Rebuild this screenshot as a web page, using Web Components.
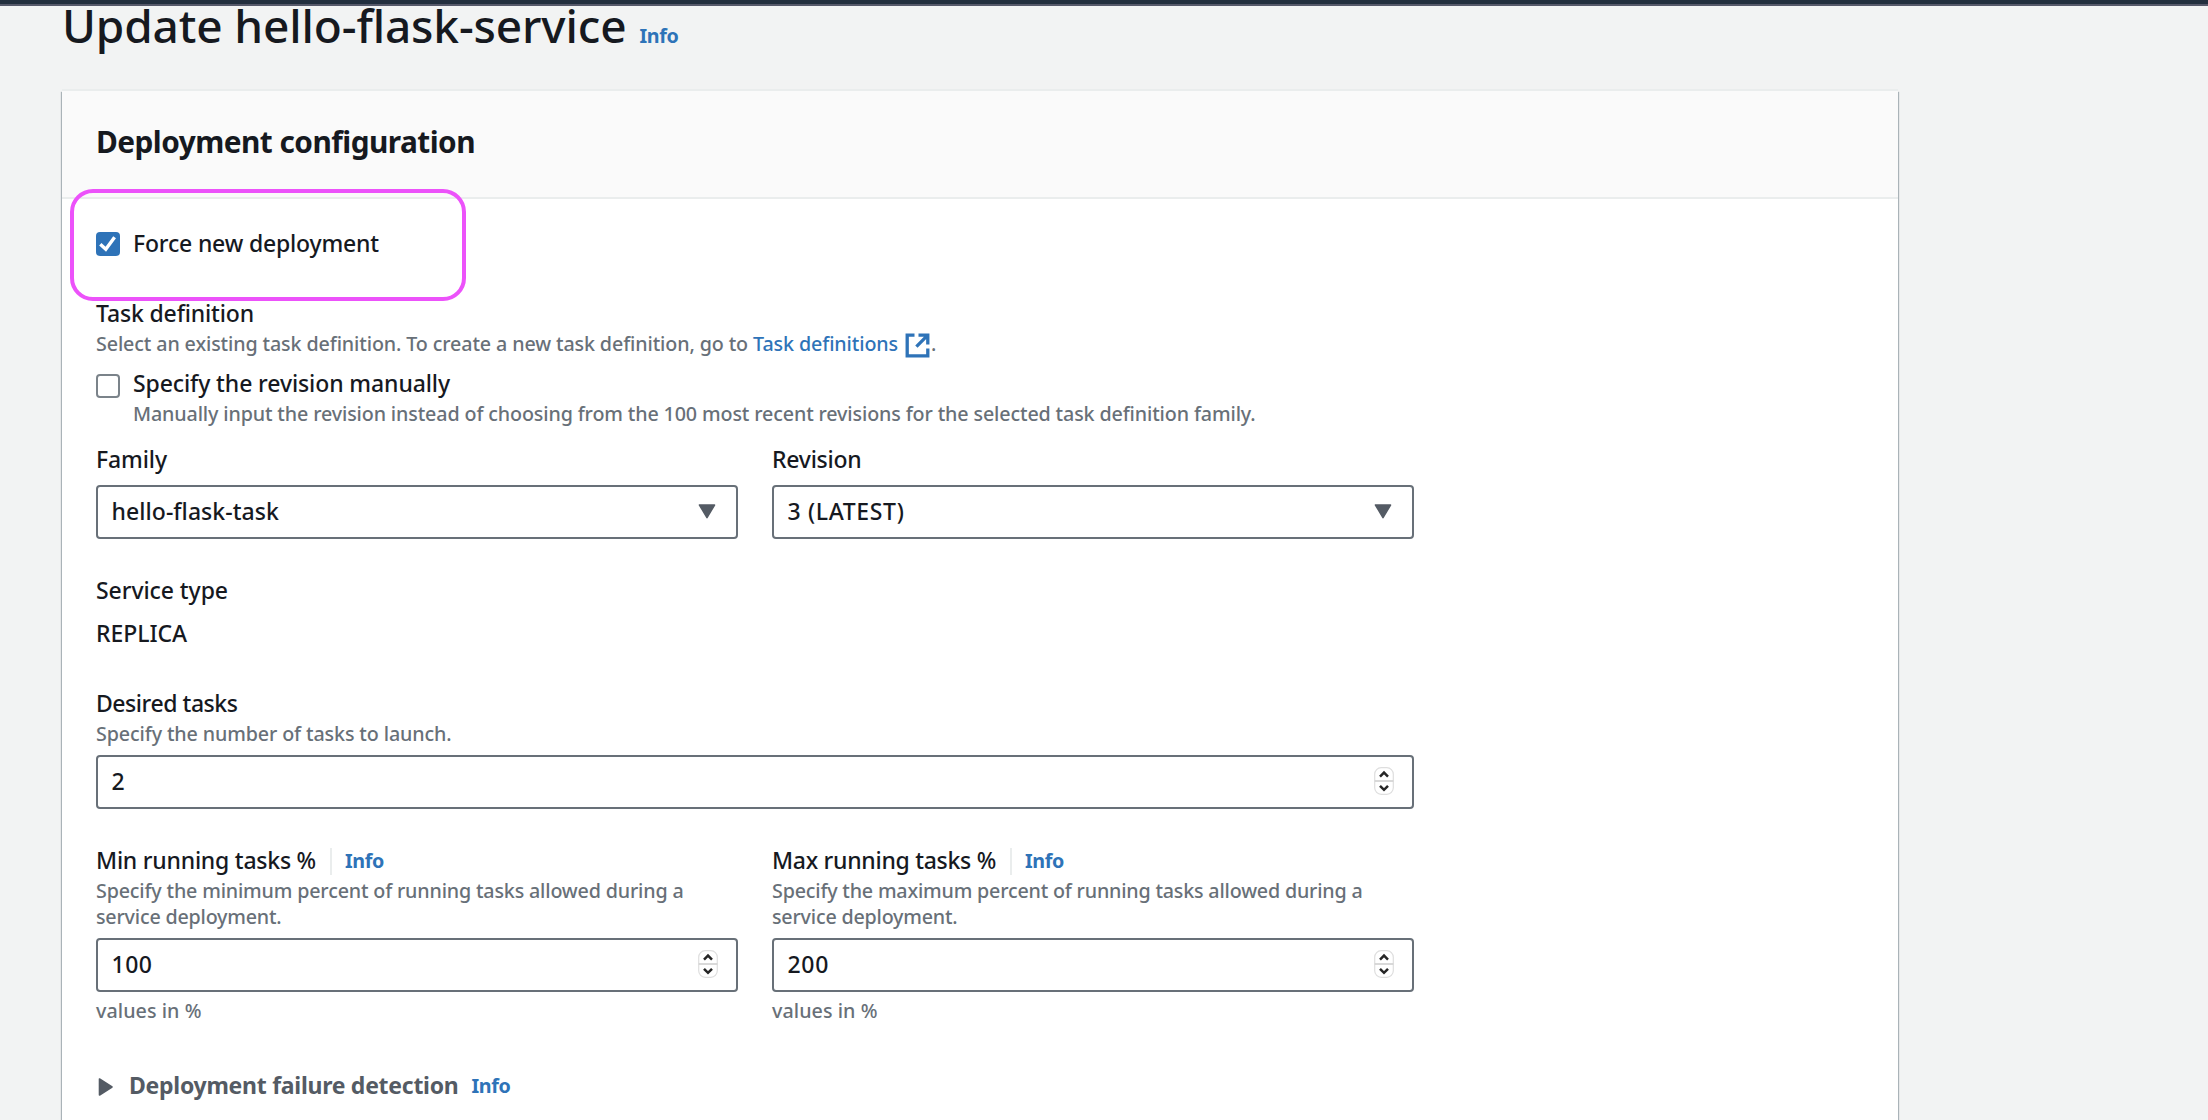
<!DOCTYPE html>
<html lang="en">
<head>
<meta charset="utf-8">
<title>Update hello-flask-service</title>
<style>
html,body{margin:0;padding:0}
body{width:2208px;height:1120px;overflow:hidden;background:#f2f3f3;color:#16191f;font-family:"Noto Sans","Open Sans",sans-serif}
</style>
</head>
<body>
<ecs-page></ecs-page>

<script>
/* One line of text, tracked so that its advance equals the "fit" width. */
class UiText extends HTMLElement {
  constructor() {
    super();
    this.attachShadow({mode:'open'}).innerHTML = `
<style>
:host{display:block;height:30px;line-height:30px;font-size:23px;font-weight:500;color:#16191f;white-space:nowrap;flex:none}
:host([kind=desc]){height:26px;line-height:26px;font-size:19.7px;color:#687078}
:host([kind=link]){height:26px;line-height:26px;font-size:19.7px;color:#2e73b8}
:host([kind=info]){height:30px;line-height:32px;font-size:19.7px;font-weight:700;color:#2e73b8}
:host([kind=h1]){height:38px;line-height:38px;font-size:46px;font-weight:500}
:host([kind=h2]){height:40px;line-height:40px;font-size:29.8px;font-weight:700}
:host([kind=expand]){font-weight:700;color:#545b64}
span{display:inline-block}
</style><span><slot></slot></span>`;
  }
  connectedCallback() {
    const fit = parseFloat(this.getAttribute('fit'));
    if (!fit) return;
    const span = this.shadowRoot.querySelector('span');
    const natural = span.getBoundingClientRect().width;
    span.style.letterSpacing = ((fit - natural) / this.textContent.length).toFixed(3) + 'px';
  }
}

class UiCheckbox extends HTMLElement {
  constructor() {
    super();
    this.attachShadow({mode:'open'}).innerHTML = `
<style>
:host{display:flex;gap:13px;align-items:flex-start}
.box{box-sizing:border-box;width:24px;height:24px;margin-top:var(--box-top,4px);border:2px solid #7b838a;border-radius:4px;background:#fff;flex:none}
svg{display:none}
:host([checked]) .box{border:0;background:#2e73b8}
:host([checked]) svg{display:block}
.body{display:flex;flex-direction:column;gap:3px}
</style>
<div class="box"><svg width="24" height="24" viewBox="0 0 24 24" fill="none" stroke="#fff" stroke-width="3.4"><path d="M4.3 12.2 9.8 17.2 18.6 5.2"/></svg></div>
<div class="body"><slot></slot></div>`;
  }
}

class UiField extends HTMLElement {
  constructor() {
    super();
    this.attachShadow({mode:'open'}).innerHTML = `
<style>
:host{box-sizing:border-box;display:flex;justify-content:space-between;height:54px;padding:8.5px 20px 0 13.5px;border:2px solid #687078;border-radius:4px;background:#fff}
:host([type=number]){padding-right:18px}
.caret{display:none;margin:8px 0 0}
.spin{display:none;width:20px;height:28px;margin-top:1.5px}
:host([type=select]) .caret{display:block}
:host([type=number]) .spin{display:block}
</style>
<slot></slot>
<svg class="caret" width="18" height="15" viewBox="0 0 18 15"><path d="M1.5 1h15L9 13.6z" fill="#545b64" stroke="#545b64" stroke-width="1.6" stroke-linejoin="round"/></svg>
<svg class="spin" viewBox="0 0 20 28"><rect x=".7" y=".7" width="18.6" height="26.6" rx="6.5" fill="#fff" stroke="#dedede" stroke-width="1.2"/><path d="M.7 14h18.6" stroke="#d0d0d0" stroke-width="1.6"/><path d="M6 9.6l4-4 4 4M6 18.8l4 4 4-4" fill="none" stroke="#262626" stroke-width="2.5"/></svg>`;
  }
}

class UiLabelRow extends HTMLElement {
  constructor() {
    super();
    this.attachShadow({mode:'open'}).innerHTML = `
<style>
:host{display:flex;height:30px}
i{width:2px;height:27px;margin:3px 13px 0 14px;background:#eaeded}
</style>
<slot></slot><i></i><slot name="info"></slot>`;
  }
}

class UiCard extends HTMLElement {
  constructor() {
    super();
    this.attachShadow({mode:'open'}).innerHTML = `
<style>
:host{display:block;width:1836px;height:1060px;margin-left:62px;background:#fff;box-shadow:-1px 1px 1px 0 #aab3b8,1px 1px 1px 0 #aab3b8,0 -2px 0 0 #eaeded}
header{box-sizing:border-box;height:108px;padding:31px 34px 0;background:#fafafa;border-bottom:2px solid #eaeded}
.body{display:flex;flex-direction:column;padding:29px 0 0 34px;width:1318px}
</style>
<header><slot name="title"></slot></header>
<div class="body"><slot></slot></div>`;
  }
}

class EcsPage extends HTMLElement {
  constructor() {
    super();
    this.attachShadow({mode:'open'}).innerHTML = `
<style>
:host{display:block;position:relative;width:2208px;height:1120px;overflow:hidden;background:#f2f3f3}
.bar{height:4px;background:#232f3e;border-bottom:2px solid #56596a}
.head{display:flex;height:85px;margin-left:60px}
.head ui-text[kind=info]{margin:14px 0 0 13px}
.line{display:flex;height:26px;margin-top:3px}
.line svg{margin:2px 1px 0 7px}
.cols{display:grid;grid-template-columns:642px 642px;gap:34px}
ui-field{margin-top:8px}
.mark{position:absolute;left:70px;top:189px;width:388px;height:104px;border:4px solid #ec52fa;border-radius:23px}
.expand{display:flex;margin-top:46px}
.expand svg{margin:7px 15px 0 2px}
.expand ui-text[kind=info]{margin-left:13px}
</style>
<div class="bar"></div>
<div class="head"><ui-text kind="h1" fit="564.5" style="margin-left:2px">Update hello-flask-service</ui-text><ui-text kind="info" fit="39">Info</ui-text></div>
<ui-card>
  <ui-text slot="title" kind="h2" fit="379">Deployment configuration</ui-text>
  <ui-checkbox checked><ui-text fit="246">Force new deployment</ui-text></ui-checkbox>
  <ui-text fit="158" style="margin-top:40px">Task definition</ui-text>
  <div class="line"><ui-text kind="desc" fit="652">Select an existing task definition. To create a new task definition, go to</ui-text><ui-text kind="link" fit="145" style="margin-left:5px">Task definitions</ui-text><svg width="25" height="25" viewBox="0 0 25 25" fill="none" stroke="#2e73b8" stroke-width="3.3"><path d="M9.5 2.2H2.2v20.6h20.6v-7.3M13.5 2.2h9.3v9.3M22.3 2.7 11.4 13.6"/></svg><ui-text kind="desc">.</ui-text></div>
  <ui-checkbox style="margin-top:11px;--box-top:6px"><ui-text fit="317">Specify the revision manually</ui-text><ui-text kind="desc" fit="1122.5">Manually input the revision instead of choosing from the 100 most recent revisions for the selected task definition family.</ui-text></ui-checkbox>
  <div class="cols" style="margin-top:17px">
    <div><ui-text fit="71">Family</ui-text><ui-field type="select" style="margin-top:11px"><ui-text fit="167.5">hello-flask-task</ui-text></ui-field></div>
    <div><ui-text fit="89.5">Revision</ui-text><ui-field type="select" style="margin-top:11px"><ui-text fit="117">3 (LATEST)</ui-text></ui-field></div>
  </div>
  <ui-text fit="132" style="margin-top:36px">Service type</ui-text>
  <ui-text fit="91" style="margin-top:13px">REPLICA</ui-text>
  <ui-text fit="141.5" style="margin-top:40px">Desired tasks</ui-text>
  <ui-text kind="desc" fit="355.5" style="margin-top:3px">Specify the number of tasks to launch.</ui-text>
  <ui-field type="number"><ui-text>2</ui-text></ui-field>
  <div class="cols" style="margin-top:36px">
    <div>
      <ui-label-row><ui-text fit="220">Min running tasks %</ui-text><ui-text slot="info" kind="info" fit="39">Info</ui-text></ui-label-row>
      <ui-text kind="desc" fit="587.5" style="margin-top:3px">Specify the minimum percent of running tasks allowed during a</ui-text>
      <ui-text kind="desc" fit="185.5">service deployment.</ui-text>
      <ui-field type="number"><ui-text fit="41">100</ui-text></ui-field>
      <ui-text kind="desc" fit="105.5" style="margin-top:6px">values in %</ui-text>
    </div>
    <div>
      <ui-label-row><ui-text fit="224">Max running tasks %</ui-text><ui-text slot="info" kind="info" fit="39">Info</ui-text></ui-label-row>
      <ui-text kind="desc" fit="590.5" style="margin-top:3px">Specify the maximum percent of running tasks allowed during a</ui-text>
      <ui-text kind="desc" fit="185.5">service deployment.</ui-text>
      <ui-field type="number"><ui-text fit="41.5">200</ui-text></ui-field>
      <ui-text kind="desc" fit="105.5" style="margin-top:6px">values in %</ui-text>
    </div>
  </div>
  <div class="expand"><svg width="16" height="20" viewBox="0 0 16 20"><path d="M1.5 2v16L14 10z" fill="#545b64" stroke="#545b64" stroke-width="1.6" stroke-linejoin="round"/></svg><ui-text kind="expand" fit="329.5">Deployment failure detection</ui-text><ui-text kind="info" fit="39">Info</ui-text></div>
</ui-card>
<div class="mark"></div>`;
  }
}

customElements.define('ui-checkbox', UiCheckbox);
customElements.define('ui-field', UiField);
customElements.define('ui-label-row', UiLabelRow);
customElements.define('ui-card', UiCard);
customElements.define('ecs-page', EcsPage);
customElements.define('ui-text', UiText);
</script>
</body>
</html>
